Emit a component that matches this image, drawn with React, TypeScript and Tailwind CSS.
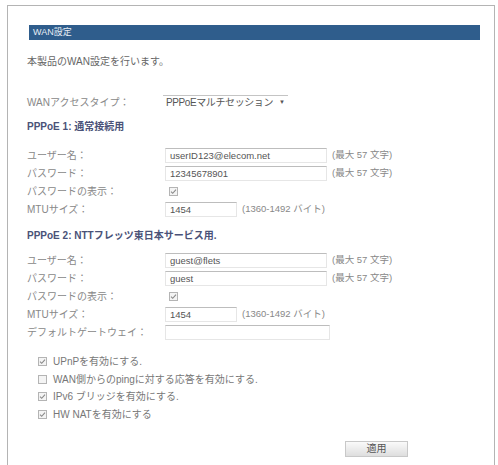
import React from 'react'

const font = { fontFamily: '"Liberation Sans", "Noto Sans CJK JP", sans-serif' }

function Check({ on }: { on: boolean }) {
  return (
    <svg width="9" height="9" viewBox="0 0 9 9" className="shrink-0">
      <rect x="0.5" y="0.5" width="8" height="8" fill="#f4f4f4" stroke="#b4b4b4" />
      {on && <path d="M2 4.6 L3.7 6.3 L7 2.6" fill="none" stroke="#8a8a8a" strokeWidth="1.1" />}
    </svg>
  )
}

function Field({ value, w = 'w-[162px]' }: { value: string; w?: string }) {
  return (
    <div
      className={`${w} h-[15px] overflow-hidden whitespace-nowrap border border-[#e6e6e6] border-t-[#bdbdbd] bg-white pl-[4px] text-[9.5px] leading-[13px] text-[#555]`}
    >
      {value}
    </div>
  )
}

function Row({ label, children }: { label: string; children: React.ReactNode }) {
  return (
    <div className="flex h-[18px] items-center">
      <div className="w-[138px] shrink-0 text-[10px] text-[#888]">{label}</div>
      <div className="flex items-center">{children}</div>
    </div>
  )
}

function Hint({ text }: { text: string }) {
  return <span className="ml-[5px] text-[9.5px] text-[#888]">{text}</span>
}

function Section({ title, user, pass, gateway }: { title: string; user: string; pass: string; gateway?: boolean }) {
  return (
    <>
      <div className="h-[16px] text-[10px] font-bold leading-[16px] text-[#4a5278]">{title}</div>
      <div className={gateway ? 'mt-[7px]' : 'mt-[11px]'}>
        <Row label="ユーザー名：">
          <Field value={user} />
          <Hint text="(最大 57 文字)" />
        </Row>
        <Row label="パスワード：">
          <Field value={pass} />
          <Hint text="(最大 57 文字)" />
        </Row>
        <Row label="パスワードの表示：">
          <div className="pl-[4px]">
            <Check on />
          </div>
        </Row>
        <Row label="MTUサイズ：">
          <Field value="1454" w="w-[72px]" />
          <Hint text="(1360-1492 バイト)" />
        </Row>
        {gateway && (
          <Row label="デフォルトゲートウェイ：">
            <Field value="" w="w-[165px]" />
          </Row>
        )}
      </div>
    </>
  )
}

export default function App() {
  const options = [
    { on: true, text: 'UPnPを有効にする.' },
    { on: false, text: 'WAN側からのpingに対する応答を有効にする.' },
    { on: true, text: 'IPv6 ブリッジを有効にする.' },
    { on: true, text: 'HW NATを有効にする' },
  ]

  return (
    <div className="h-[465px] w-[498px] overflow-hidden bg-white pl-[7px] pr-[3px] pt-[5px]" style={font}>
      <div className="h-full border border-b-0 border-[#b4b4b4] pl-[19px] pr-[14px] pt-[19px]">
        <div className="ml-[2px] h-[15px] bg-[#2f5d8c] pl-[4px] text-[9px] leading-[15px] text-[#e8eef5]">WAN設定</div>

        <div className="mt-[14px] h-[16px] text-[10px] leading-[16px] text-[#666]">本製品のWAN設定を行います。</div>

        <div className="mt-[23px] flex h-[18px] items-center">
          <div className="w-[136px] shrink-0 text-[10px] text-[#888]">WANアクセスタイプ：</div>
          <div className="flex h-[15px] w-[125px] items-center justify-between overflow-hidden whitespace-nowrap border-t border-[#c4c4c4] pl-[3px] pr-[3px] text-[10px] text-[#555]">
            <span className="tracking-[-0.4px]">PPPoEマルチセッション</span>
            <span className="text-[6px]">▼</span>
          </div>
        </div>

        <div className="mt-[8px]">
          <Section title="PPPoE 1: 通常接続用" user="userID123@elecom.net" pass="12345678901" />
        </div>

        <div className="mt-[10px]">
          <Section title="PPPoE 2: NTTフレッツ東日本サービス用." user="guest@flets" pass="guest" gateway />
        </div>

        <div className="mt-[12px] pl-[11px]">
          {options.map((o) => (
            <div key={o.text} className="flex h-[17.5px] items-center gap-[6px]">
              <Check on={o.on} />
              <span className="text-[10px] text-[#777]">{o.text}</span>
            </div>
          ))}
        </div>

        <div className="ml-[318px] mt-[12px]">
          <button className="h-[16px] w-[63px] border border-[#c8c8c8] bg-gradient-to-b from-[#fafafa] to-[#dedede] text-[10px] leading-[14px] text-[#555]">
            適用
          </button>
        </div>
      </div>
    </div>
  )
}
